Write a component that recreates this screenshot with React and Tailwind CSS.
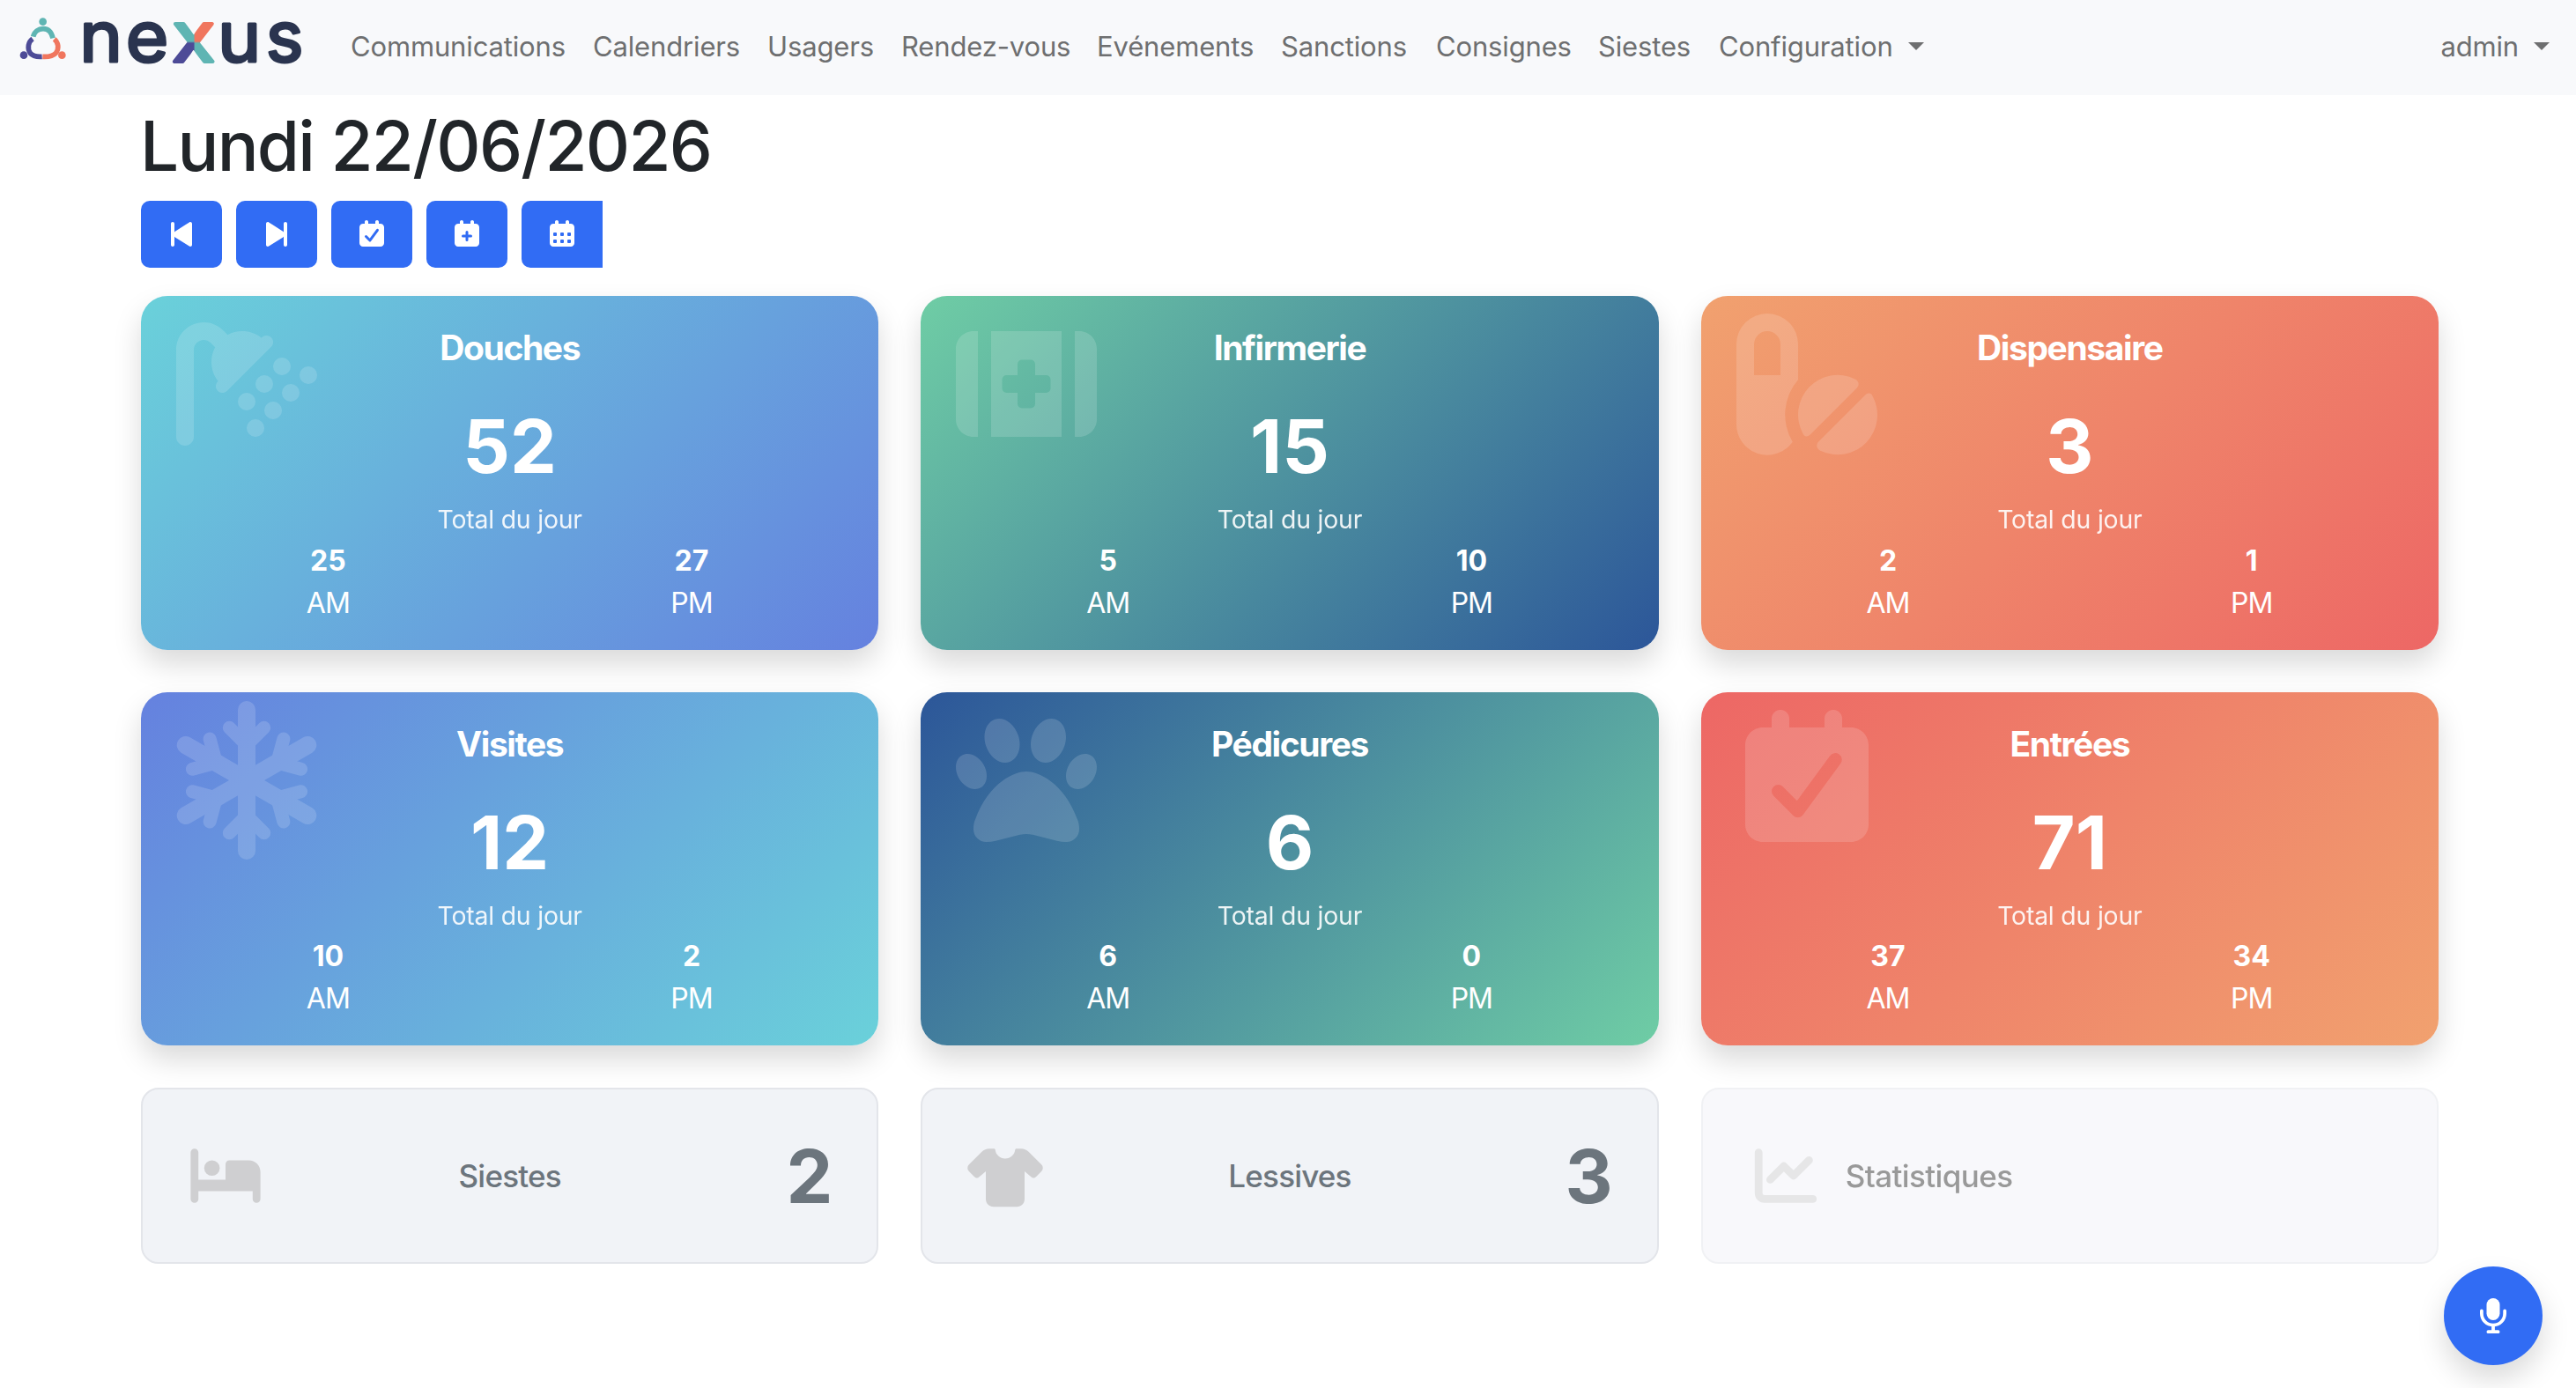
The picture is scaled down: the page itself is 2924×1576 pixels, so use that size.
import React from 'react'
import { FaShower, FaPaw, FaChartLine } from 'react-icons/fa6'

const navItems = [
  { label: 'Communications', width: 'w-[275px]' },
  { label: 'Calendriers', width: 'w-[198px]' },
  { label: 'Usagers', width: 'w-[152px]' },
  { label: 'Rendez-vous', width: 'w-[222px]' },
  { label: 'Evénements', width: 'w-[209px]' },
  { label: 'Sanctions', width: 'w-[176px]' },
  { label: 'Consignes', width: 'w-[184px]' },
  { label: 'Siestes', width: 'w-[137px]' }
]

// Every icon is drawn on a 512 grid centered in a 640 box
const Icon = ({ className, children }) => (
  <svg viewBox="-64 -64 640 640" fill="currentColor" className={className}>
    {children}
  </svg>
)

const PreviousIcon = ({ className }) => (
  <Icon className={className}>
    <path
      transform="translate(64 0)"
      d="M32 32c17.700 0 32 14.300 32 32v153c3-6 7-11 13-15L334 38.500c5-4 12-6.500 18-6.500 17.700 0 32 14.300 32 32v384c0 17.700-14.300 32-32 32-6 0-13-2.500-18-6.500L77 310c-6-4-10-9-13-15v153c0 17.700-14.300 32-32 32S0 465.700 0 448V64c0-17.700 14.300-32 32-32z"
    />
  </Icon>
)

const NextIcon = ({ className }) => (
  <Icon className={className}>
    <path
      transform="translate(448 0) scale(-1 1)"
      d="M32 32c17.700 0 32 14.300 32 32v153c3-6 7-11 13-15L334 38.500c5-4 12-6.500 18-6.500 17.700 0 32 14.300 32 32v384c0 17.700-14.300 32-32 32-6 0-13-2.500-18-6.500L77 310c-6-4-10-9-13-15v153c0 17.700-14.300 32-32 32S0 465.700 0 448V64c0-17.700 14.300-32 32-32z"
    />
  </Icon>
)

const Calendar = ({ id, className, children }) => (
  <Icon className={className}>
    <mask id={id} maskUnits="userSpaceOnUse" x="0" y="0" width="512" height="512">
      <rect width="512" height="512" fill="#fff" />
      <g transform="translate(32 0)" fill="none" stroke="#000" strokeWidth="48" strokeLinecap="round" strokeLinejoin="round">
        {children}
      </g>
    </mask>
    <g mask={`url(#${id})`}>
      <path
        transform="translate(32 0)"
        d="M128 0c17.700 0 32 14.300 32 32v32h128V32c0-17.700 14.300-32 32-32s32 14.300 32 32v32h32c35.300 0 64 28.700 64 64v288c0 35.300-28.700 64-64 64H64c-35.300 0-64-28.700-64-64V128c0-35.300 28.700-64 64-64h32V32c0-17.700 14.300-32 32-32z"
      />
    </g>
  </Icon>
)

const CalendarCheckIcon = ({ className, id = 'calendar-check' }) => (
  <Calendar id={id} className={className}>
    <path d="M120 296l71 71L327 181" />
  </Calendar>
)

const CalendarPlusIcon = ({ className }) => (
  <Calendar id="calendar-plus" className={className}>
    <path d="M224 216v144M152 288h144" />
  </Calendar>
)

const CalendarDaysIcon = ({ className }) => (
  <Calendar id="calendar-days" className={className}>
    <g fill="#000" stroke="none">
      <rect x="64" y="224" width="64" height="64" rx="16" />
      <rect x="192" y="224" width="64" height="64" rx="16" />
      <rect x="320" y="224" width="64" height="64" rx="16" />
      <rect x="64" y="352" width="64" height="64" rx="16" />
      <rect x="192" y="352" width="64" height="64" rx="16" />
      <rect x="320" y="352" width="64" height="64" rx="16" />
    </g>
  </Calendar>
)

const KitIcon = ({ className }) => (
  <Icon className={className}>
    <path
      fillRule="evenodd"
      d="M64 64h16v384H64c-35.300 0-64-28.700-64-64V128c0-35.300 28.700-64 64-64zM128 64h256v384H128zM432 64h16c35.300 0 64 28.700 64 64v256c0 35.300-28.700 64-64 64h-16zM240 168a16 16 0 0 0-16 16v40h-40a16 16 0 0 0-16 16v32a16 16 0 0 0 16 16h40v40a16 16 0 0 0 16 16h32a16 16 0 0 0 16-16v-40h40a16 16 0 0 0 16-16v-32a16 16 0 0 0-16-16h-40v-40a16 16 0 0 0-16-16z"
    />
  </Icon>
)

const PillsIcon = ({ className }) => (
  <Icon className={className}>
    <path
      fillRule="evenodd"
      d="M0 112a112 112 0 0 1 224 0v129A192 192 0 0 0 204 466A112 112 0 0 1 0 400zM112 64a48 48 0 0 0-48 48v112h96V112a48 48 0 0 0-48-48z"
    />
    <path d="M431 238c14 7 17 22 6 33L268 440c-10 9-21 8-26-3A144 144 0 0 1 431 238z" />
    <path d="M305 498c-14-7-17-22-6-33l169-169c10-9 21-8 26 3A144 144 0 0 1 305 498z" />
  </Icon>
)

const SnowflakeIcon = ({ className }) => (
  <Icon className={className}>
    <g fill="none" stroke="currentColor" strokeLinecap="round">
      {[0, 60, 120].map((angle) => (
        <g key={angle} transform={`rotate(${angle} 256 256)`}>
          <path strokeWidth="64" d="M256 0v512" />
          <path strokeWidth="48" d="M193 65l63 63 63-63M193 447l63-63 63 63" />
        </g>
      ))}
    </g>
  </Icon>
)

const BedIcon = ({ className }) => (
  <Icon className={className}>
    <g transform="translate(-32 0)">
      <path d="M32 32c17.700 0 32 14.300 32 32v224h224V160c0-17.700 14.300-32 32-32h160c53 0 96 43 96 96v224c0 17.700-14.300 32-32 32s-32-14.300-32-32v-64H64v64c0 17.700-14.300 32-32 32S0 465.700 0 448V64c0-17.700 14.300-32 32-32z" />
      <circle cx="176" cy="192" r="64" />
    </g>
  </Icon>
)

const ShirtIcon = ({ className }) => (
  <Icon className={className}>
    <path
      transform="translate(-64 0)"
      d="M320 114c44 0 78-31 82-72 1-6 5-10 11-10h38c24 0 45 9 62 26l106 105c16 16 16 41 0 57l-45 45c-12 12-28 12-40 0l-54-45v228c0 35.300-28.700 64-64 64H224c-35.300 0-64-28.700-64-64V220l-54 45c-12 12-28 12-40 0l-45-45c-16-16-16-41 0-57L127 58c17-17 38-26 62-26h38c6 0 10 4 11 10 4 41 38 72 82 72z"
    />
  </Icon>
)

const MicIcon = ({ className }) => (
  <Icon className={className}>
    <g transform="translate(64 0)">
      <rect x="96" width="192" height="320" rx="96" />
      <path
        d="M24 184v40a168 168 0 0 0 336 0v-40M192 392v96M120 488h144"
        fill="none"
        stroke="currentColor"
        strokeWidth="48"
        strokeLinecap="round"
      />
    </g>
  </Icon>
)

const logoLetters = [
  { letter: 'n', x: 241, scale: 1.04 },
  { letter: 'e', x: 398, scale: 1.05 },
  { letter: 'x', x: 556, scale: 1.13, fill: 'url(#logo-x)', stroke: 12 },
  { letter: 'u', x: 711, scale: 1.05 },
  { letter: 's', x: 875, scale: 1.02 }
]

const Logo = () => (
  <svg viewBox="0 0 1050 270" className="w-[350px] h-[90px] overflow-visible">
    <g fill="none" strokeWidth="17">
      <path stroke="#5fb5b3" d="M83 110C87 92 101 83 117 83S145 93 150 115" />
      <path stroke="#4d4b97" d="M81 117C66 128 62 150 73 166C82 177 96 179 113 178" />
      <path stroke="#f0765e" d="M155 118C169 130 172 150 160 166C150 177 134 179 115 178" />
    </g>
    <circle cx="116" cy="59" r="13" fill="#5fb5b3" />
    <circle cx="51" cy="173" r="13" fill="#4d4b97" />
    <circle cx="181" cy="173" r="13" fill="#f0765e" />
    <defs>
      <pattern id="logo-x" patternUnits="userSpaceOnUse" x="-33" y="-167" width="200" height="200">
        <rect width="200" height="200" fill="#5fb5b3" />
        <rect x="100" width="100" height="100" fill="#f0765e" />
        <rect y="100" width="100" height="100" fill="#4d4b97" />
      </pattern>
    </defs>
    <g fontFamily="Inter, sans-serif" fontSize="238" strokeLinejoin="round">
      {logoLetters.map(({ letter, x, scale, fill = '#2a344f', stroke = 9 }) => (
        <text key={letter} transform={`translate(${x} 196) scale(${scale} 1)`} fill={fill} stroke={fill} strokeWidth={stroke}>
          {letter}
        </text>
      ))}
    </g>
  </svg>
)

const Caret = () => (
  <span className="border-t-[9.6px] border-x-[9.6px] border-x-transparent border-t-[#6e6f70]"></span>
)

const dayCards = [
  { title: 'Douches', total: 52, am: 25, pm: 27, icon: <FaShower className="w-[200px] h-[200px] p-5" />, gradient: 'from-[#6ad1da] to-[#6581df]' },
  { title: 'Infirmerie', total: 15, am: 5, pm: 10, icon: <KitIcon className="w-[200px] h-[200px]" />, gradient: 'from-[#6fcda5] to-[#2c5699]' },
  { title: 'Dispensaire', total: 3, am: 2, pm: 1, icon: <PillsIcon className="w-[200px] h-[200px]" />, gradient: 'from-[#f1a16f] to-[#ed6765]' },
  { title: 'Visites', total: 12, am: 10, pm: 2, icon: <SnowflakeIcon className="w-[200px] h-[200px]" />, gradient: 'from-[#6581df] to-[#6ad1da]' },
  { title: 'Pédicures', total: 6, am: 6, pm: 0, icon: <FaPaw className="w-[200px] h-[200px] p-5" />, gradient: 'from-[#2c5699] to-[#6fcda5]' },
  { title: 'Entrées', total: 71, am: 37, pm: 34, icon: <CalendarCheckIcon id="calendar-entries" className="w-[200px] h-[200px]" />, gradient: 'from-[#ed6765] to-[#f1a16f]' }
]

const DayCard = ({ card }) => (
  <div className={`relative h-[401.6px] rounded-[30px] px-1.5 pt-[35px] text-center text-white bg-linear-135/srgb shadow-[0_16px_32px_rgba(0,0,0,0.15)] ${card.gradient}`}>
    <div className="absolute top-0 left-5 opacity-15">{card.icon}</div>
    <h5 className="text-[39px] leading-[48px] font-[650] tracking-[-1.400px]">{card.title}</h5>
    <div className="mt-[46px] text-[84px] leading-[84px] font-[750]">{card.total}</div>
    <div className="mt-[19px] text-[28.400px] leading-[43px] tracking-[-0.2px] opacity-90">Total du jour</div>
    <div className="mt-[1.600px] grid grid-cols-2 text-[32px] leading-[48px]">
      <div>
        <div className="font-bold">{card.am}</div>
        <div className="tracking-[-1px]">AM</div>
      </div>
      <div>
        <div className="font-bold">{card.pm}</div>
        <div className="tracking-[-1px]">PM</div>
      </div>
    </div>
  </div>
)

const CountCard = ({ title, count, icon }) => (
  <div className="h-[199.6px] grid grid-cols-[1fr_auto_1fr] items-center px-[50px] rounded-[20px] border-2 border-[#e3e5ea] bg-[#f1f3f7] text-[#6c757d]">
    <div className="text-[#cfcfd1]">{icon}</div>
    <div className="text-[35px] font-medium tracking-[-0.8px]">{title}</div>
    <div className="pt-[2px] text-right text-[84px] leading-[84px] font-[750]">{count}</div>
  </div>
)

const buttonClass = 'w-[92px] h-[76px] flex items-center justify-center bg-[#316cf4] text-white'

const App = () => {
  return (
    <div className="min-h-[1576px] bg-white font-['Inter',sans-serif] text-[#212529]">
      <nav className="h-[108px] pb-[3px] flex items-center bg-[#f8f9fb] text-[31px] leading-[48px] tracking-[-0.15px] text-[#6e6f70]">
        <div className="w-[398px] pl-[10px] pb-[5px] shrink-0">
          <Logo />
        </div>
        {navItems.map((item) => (
          <a key={item.label} className={`${item.width} shrink-0 whitespace-nowrap`}>{item.label}</a>
        ))}
        <a className="flex items-center gap-[17px]">Configuration <Caret /></a>
        <a className="flex items-center gap-[17px] ml-auto pr-[30px]">admin <Caret /></a>
      </nav>

      <main className="w-[2608px] ml-[160px] pt-[10px]">
        <h1 className="text-[78px] leading-[96px] font-[550] tracking-[-1.700px] -ml-px">Lundi 22/06/2026</h1>

        <div className="flex gap-4 mt-[14px]">
          <button className={`${buttonClass} rounded-[10px]`}><PreviousIcon className="w-10 h-10" /></button>
          <button className={`${buttonClass} rounded-[10px]`}><NextIcon className="w-10 h-10" /></button>
          <button className={`${buttonClass} rounded-[10px]`}><CalendarCheckIcon className="w-10 h-10" /></button>
          <button className={`${buttonClass} rounded-[10px]`}><CalendarPlusIcon className="w-10 h-10" /></button>
          <button className={`${buttonClass} rounded-l-[10px]`}><CalendarDaysIcon className="w-10 h-10" /></button>
        </div>

        <div className="grid grid-cols-3 gap-12 mt-8">
          {dayCards.map((card) => (
            <DayCard key={card.title} card={card} />
          ))}

          <CountCard title="Siestes" count={2} icon={<BedIcon className="w-[88px] h-[88px] overflow-visible" />} />
          <CountCard title="Lessives" count={3} icon={<ShirtIcon className="w-[88px] h-[88px] overflow-visible" />} />

          {/* Statistics are not available yet */}
          <div className="h-[199.6px] flex items-center gap-6 px-[50px] rounded-[20px] border-2 border-[#e3e5ea] bg-[#f2f3f8] opacity-50">
            <FaChartLine className="w-[88px] h-[88px] p-[8.800px] text-[#cfcfd1]" />
            <div className="text-[35px] font-medium tracking-[-0.6px] text-[#363636]">Statistiques</div>
          </div>
        </div>
      </main>

      <button className="fixed left-[2774px] top-[1438px] w-28 h-28 flex items-center justify-center rounded-full bg-[#316cf4] text-white shadow-[0_16px_32px_rgba(0,0,0,0.15)]">
        <MicIcon className="w-[50px] h-[50px]" />
      </button>
    </div>
  )
}

export default App
